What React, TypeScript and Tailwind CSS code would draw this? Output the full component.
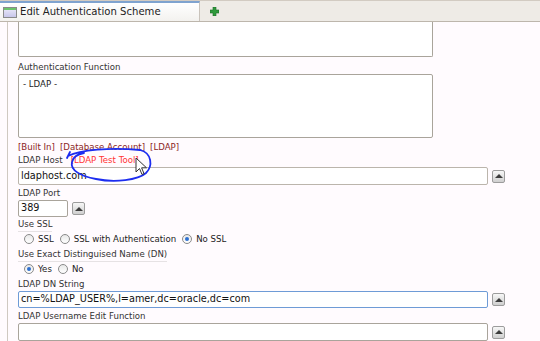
import React from "react";

const font = { fontFamily: '"DejaVu Sans", "Liberation Sans", sans-serif' };

// small grey "expand" button next to inputs
const UpButton: React.FC = () => (
  <div className="ml-[4px] flex h-[13px] w-[13px] shrink-0 items-center justify-center rounded-[2px] border border-[#9c9c9c] bg-gradient-to-b from-[#f7f7f7] to-[#cfcfcf]">
    <div className="h-0 w-0 border-x-[4px] border-b-[4px] border-x-transparent border-b-[#3c3c3c]" />
  </div>
);

const Radio: React.FC<{ checked?: boolean; label: string }> = ({ checked, label }) => (
  <div className="mr-[6px] flex items-center">
    <div className="flex h-[10px] w-[10px] items-center justify-center rounded-full border border-[#8a8a8a] bg-gradient-to-b from-[#e8e8e8] to-white">
      {checked && <div className="h-[4px] w-[4px] rounded-full bg-[#2d6fd0]" />}
    </div>
    <span className="ml-[4px] text-[8.6px] text-[#222]">{label}</span>
  </div>
);

const Label: React.FC<{ text: string; underline?: boolean }> = ({ text, underline }) => (
  <div className="flex h-[15px] items-end">
    <span className={"text-[8.6px] leading-[13px] text-[#333] " + (underline ? "border-b border-[#e6e2e4]" : "")}>{text}</span>
  </div>
);

export default function App() {
  return (
    <div className="relative h-[341px] w-[540px] overflow-hidden bg-[#fffbfe]" style={font}>
      {/* tab bar */}
      <div className="flex h-[22px] border-b border-[#bdb6ac] border-t border-t-[#d2cbc2] bg-[#eeebe6]">
        <div className="flex w-[200px] items-center border-r border-[#c9c3bb] border-t-2 border-t-[#7fa3cf] bg-gradient-to-b from-white to-[#f3f2ef] pl-[3px]">
          <div className="flex h-[11px] w-[14px] flex-col border border-[#8a8a8a]">
            <div className="h-[2px] bg-[#6cc46c]" />
            <div className="flex-1 bg-gradient-to-b from-[#e4e2f6] to-[#c8c6ea]" />
          </div>
          <span className="ml-[3px] text-[10.1px] text-[#222]">Edit Authentication Scheme</span>
        </div>
        <div className="flex w-[28px] items-center justify-center">
          <svg width="9" height="9" viewBox="0 0 9 9">
            <path d="M3 0h3v3h3v3H6v3H3V6H0V3h3z" fill="#2f9a3c" stroke="#1d6b28" strokeWidth="0.6" />
          </svg>
        </div>
      </div>

      <div className="ml-[7px] h-full border-l border-[#cfc9c1] pl-[10px]">
        {/* scrolled textarea */}
        <div className="h-[35px] w-[415px] rounded-b-[2px] border-x border-b border-[#a9a49b] bg-white" />

        <div className="mt-[2px]">
          <Label text="Authentication Function" />
        </div>
        <div className="h-[64px] w-[415px] rounded-[2px] border border-[#a9a49b] bg-white px-[4px] pt-[3px] text-[8.6px] text-[#222]">
          - LDAP -
        </div>

        <div className="mt-[3px] flex h-[13px] items-end text-[8.6px] text-[#8b2424]">
          <span>[Built In]</span>
          <span className="ml-[5px]">[Database Account]</span>
          <span className="ml-[5px]">[LDAP]</span>
        </div>

        <div className="flex h-[13px] items-end text-[8.6px]">
          <span className="text-[#333]">LDAP Host</span>
          <span className="ml-[8px] text-[#ff3434]">[LDAP Test Tool]</span>
        </div>
        <div className="flex items-center">
          <div className="flex h-[18px] w-[470px] items-center rounded-[2px] border border-[#bbb5ac] bg-white px-[2px] text-[9.7px] text-[#111]">
            ldaphost.com
          </div>
          <UpButton />
        </div>

        <Label text="LDAP Port" />
        <div className="flex items-center">
          <div className="flex h-[17px] w-[50px] items-center rounded-[2px] border border-[#a9a49b] bg-white px-[2px] text-[9.7px] text-[#111]">
            389
          </div>
          <UpButton />
        </div>

        <Label text="Use SSL" underline />
        <div className="flex h-[15px] items-center pl-[6px]">
          <Radio label="SSL" />
          <Radio label="SSL with Authentication" />
          <Radio label="No SSL" checked />
        </div>

        <Label text="Use Exact Distinguised Name (DN)" underline />
        <div className="flex h-[15px] items-center pl-[6px]">
          <Radio label="Yes" checked />
          <Radio label="No" />
        </div>

        <div className="-mt-[1px]">
          <Label text="LDAP DN String" />
        </div>
        <div className="flex items-center">
          <div className="flex h-[17px] w-[470px] items-center rounded-[2px] border border-[#6e9bd6] bg-white px-[2px] text-[9.7px] text-[#111]">
            cn=%LDAP_USER%,l=amer,dc=oracle,dc=com
          </div>
          <UpButton />
        </div>

        <Label text="LDAP Username Edit Function" />
        <div className="flex items-center">
          <div className="h-[18px] w-[470px] rounded-[2px] border border-[#a9a49b] bg-white" />
          <UpButton />
        </div>
      </div>

      {/* hand-drawn annotation */}
      <svg className="pointer-events-none absolute left-0 top-0" width="540" height="341">
        <path
          d="M67 158 L70 152 M68 156 C80 150 110 147 140 150 C152 153 153 166 146 173 C138 180 115 183 96 179 C80 176 70 170 72 162 C73 157 78 154 84 153"
          fill="none"
          stroke="#1c2df0"
          strokeWidth="1.8"
          strokeLinecap="round"
        />
      </svg>
      <svg className="pointer-events-none absolute left-[135px] top-[157px]" width="14" height="20" viewBox="0 0 14 20">
        <path d="M1 1 L1 15 L4.5 11.5 L7 17.5 L9 16.6 L6.6 10.8 L11.5 10.8 Z" fill="white" stroke="#333" strokeWidth="1" strokeLinejoin="round" />
      </svg>
    </div>
  );
}
